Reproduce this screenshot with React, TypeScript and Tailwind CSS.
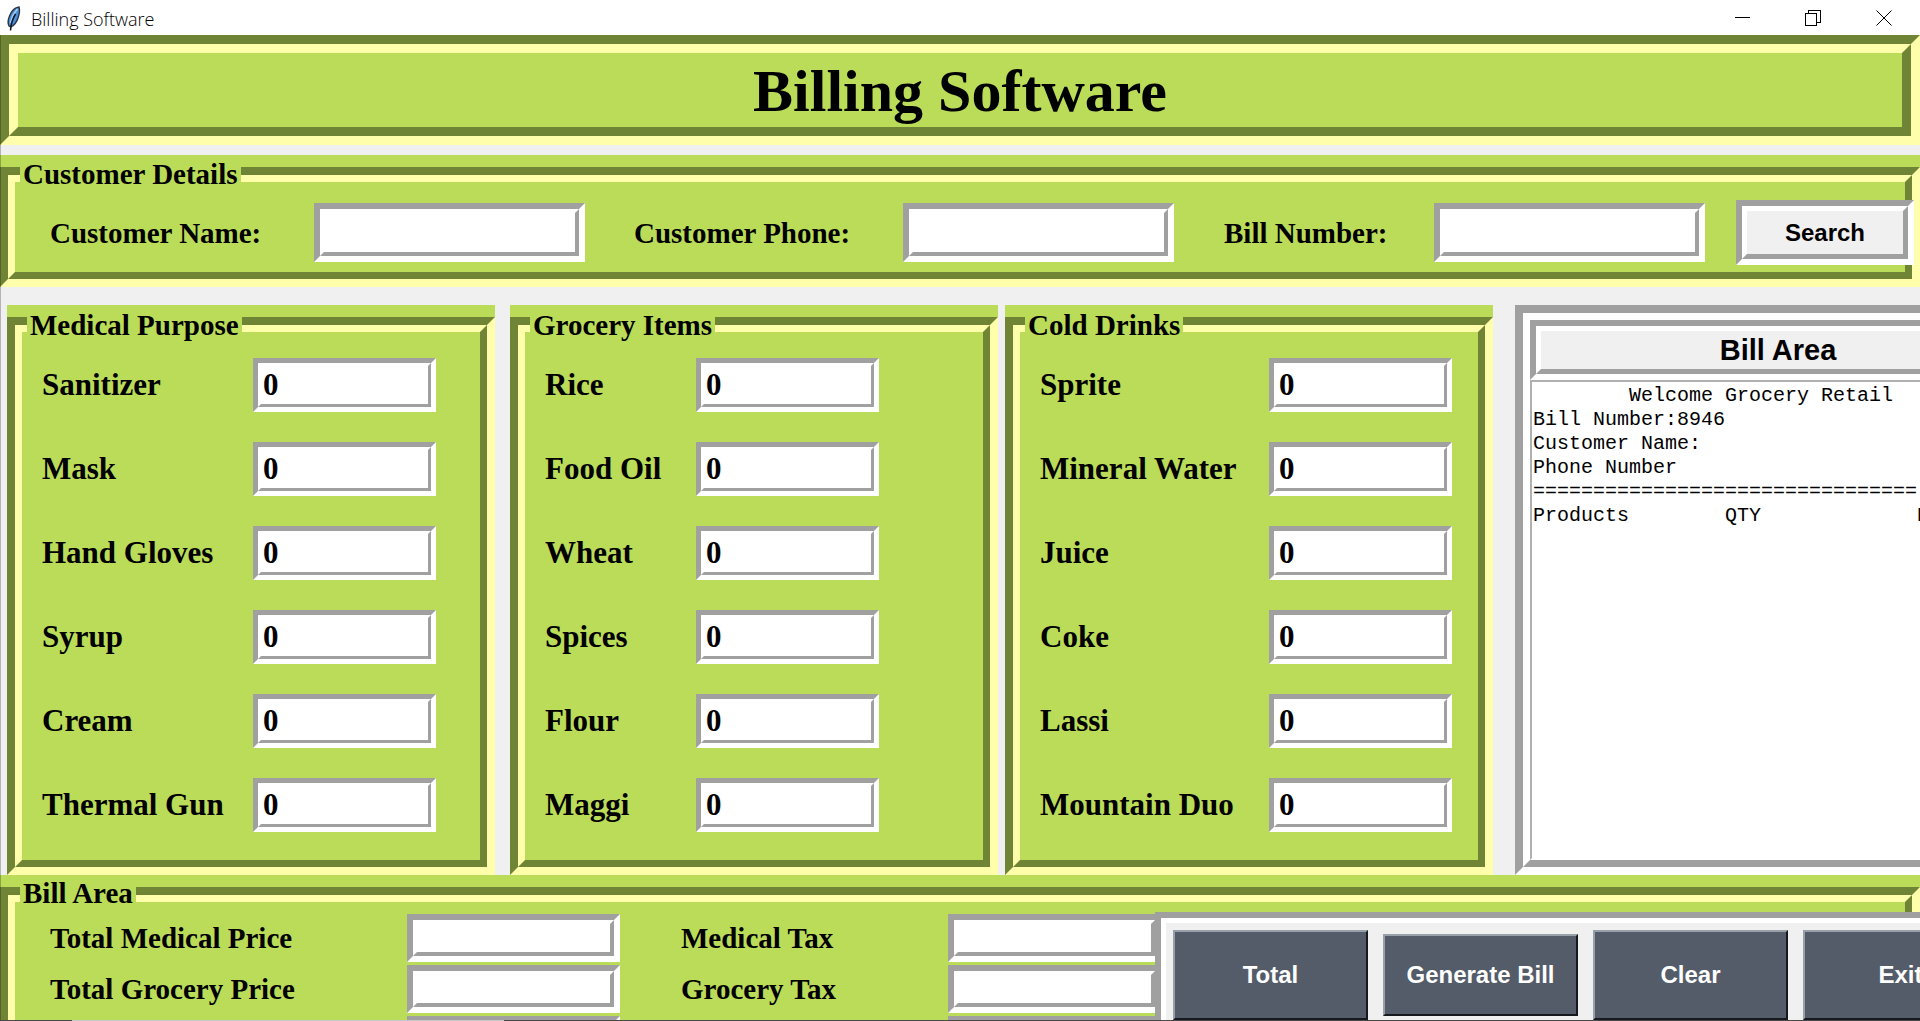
import { useId, type ReactNode } from "react";

const serif = "font-['Liberation_Serif','Times_New_Roman',serif] font-bold";
const sans = "font-['Liberation_Sans',Arial,sans-serif] font-bold";
const mono = "font-['Liberation_Mono','Courier_New',monospace]";

/* A groove is two nested frames: the outer one sunken, the inner one raised. */
const greenOuter = "border-t-[#708435] border-l-[#708435] border-b-[#ffffab] border-r-[#ffffab]";
const greenInner = "border-t-[#ffffab] border-l-[#ffffab] border-b-[#708435] border-r-[#708435]";
const grayOuter = "border-t-[#a0a0a0] border-l-[#a0a0a0] border-b-white border-r-white";
const grayInner = "border-t-white border-l-white border-b-[#a0a0a0] border-r-[#a0a0a0]";

function Field({
  className,
  inner,
  id,
  value = "",
}: {
  className: string;
  inner: string;
  id: string;
  value?: string;
}) {
  return (
    <div className={`flex shrink-0 ${grayOuter} ${className}`}>
      <input
        id={id}
        type="text"
        defaultValue={value}
        className={`min-w-0 flex-1 bg-white px-0.5 text-black outline-none ${grayInner} ${inner}`}
      />
    </div>
  );
}

function Group({
  title,
  className = "",
  legendClass,
  bodyClass,
  children,
}: {
  title: string;
  className?: string;
  legendClass: string;
  bodyClass: string;
  children: ReactNode;
}) {
  return (
    <fieldset className={`relative flex min-w-0 flex-col bg-[#badc58] pt-3 ${className}`}>
      <div className={`flex flex-1 flex-col border-8 ${greenOuter}`}>
        <div className={`flex-1 border-[7px] ${greenInner} ${bodyClass}`}>{children}</div>
      </div>
      <legend className={`absolute left-5 bg-[#badc58] px-[3px] leading-8 ${serif} ${legendClass}`}>
        {title}
      </legend>
    </fieldset>
  );
}

function CustomerField({ label }: { label: string }) {
  const id = useId();
  return (
    <>
      <label htmlFor={id} className={`text-[29px] leading-8 whitespace-nowrap ${serif}`}>
        {label}
      </label>
      <Field id={id} className="h-[59px] w-[271px] border-6" inner={`border-4 text-2xl ${sans}`} />
    </>
  );
}

function ItemRow({ label }: { label: string }) {
  const id = useId();
  return (
    <>
      <label htmlFor={id} className={`text-[31px] leading-9 whitespace-nowrap ${serif}`}>
        {label}
      </label>
      <Field
        id={id}
        value="0"
        className="h-[54px] border-[5px]"
        inner={`border-[3px] text-[31px] leading-9 ${serif}`}
      />
    </>
  );
}

function ItemGroup({ title, items, columns }: { title: string; items: string[]; columns: string }) {
  return (
    <Group
      title={title}
      className="w-[488px] shrink-0"
      legendClass="top-1 text-[29px]"
      bodyClass="pt-[26px] pb-7 pl-5"
    >
      <div className={`grid items-center justify-start gap-y-[30px] ${columns}`}>
        {items.map((item) => (
          <ItemRow key={item} label={item} />
        ))}
      </div>
    </Group>
  );
}

function TotalsRow({ label, tax }: { label: string; tax: string }) {
  const a = useId();
  const b = useId();
  const text = `text-[29px] leading-6 whitespace-nowrap ${serif}`;
  return (
    <>
      <label htmlFor={a} className={text}>
        {label}
      </label>
      <Field id={a} className="h-12 border-6" inner={`border-4 text-xl ${sans}`} />
      <label htmlFor={b} className={`pl-[61px] ${text}`}>
        {tax}
      </label>
      <Field id={b} className="h-12 border-6" inner={`border-4 text-xl ${sans}`} />
    </>
  );
}

function ActionButton({ label, height }: { label: string; height: string }) {
  return (
    <button
      type="button"
      className={`w-[195px] shrink-0 border-2 border-t-[#98a1a9] border-l-[#98a1a9] border-r-[#16191d] border-b-[#16191d] bg-[#535c68] text-2xl whitespace-nowrap text-white ${height} ${sans}`}
    >
      {label}
    </button>
  );
}

function TitleBar() {
  return (
    <header className="flex h-[35px] shrink-0 items-center bg-white">
      <svg className="ml-1.5 h-8 w-4 shrink-0" viewBox="0 0 16 32" aria-hidden="true">
        <path
          d="M13 5C9.500 5.500 5.500 9 3.500 14c-1.500 3.700-2 7-.5 10l2 1c3.500-2 6-5.500 7.200-9.500C13.500 11.500 14 8 13 5Z"
          fill="#4a8fdc"
          stroke="#2c3644"
          strokeWidth="1.400"
        />
        <path d="M11.500 7C8 11 5.500 15.500 4.500 21" stroke="#a9cdf5" strokeWidth="1.600" fill="none" />
        <path d="M9.500 12c-2.500 4-4.500 9-5 16.500" stroke="#101820" strokeWidth="1.500" fill="none" />
      </svg>
      <span className="mt-0.5 ml-[9px] font-['Open_Sans','Noto_Sans',sans-serif] text-lg leading-6 font-light text-black">
        Billing Software
      </span>
      <div className="ml-auto flex h-full">
        <button type="button" aria-label="Minimize" className="grid w-[70px] place-items-center">
          <svg width="16" height="16" viewBox="0 0 16 16" shapeRendering="crispEdges">
            <path d="M0 7.500h15" stroke="#000" />
          </svg>
        </button>
        <button type="button" aria-label="Restore" className="grid w-[69px] place-items-center">
          <svg width="16" height="16" viewBox="0 0 16 16" fill="none" shapeRendering="crispEdges">
            <path d="M.5 3.500h11v12H.5zM3.500 3.500v-3h12v12h-4" stroke="#000" />
          </svg>
        </button>
        <button type="button" aria-label="Close" className="grid w-[73px] place-items-center">
          <svg width="16" height="16" viewBox="0 0 16 16">
            <path d="M.5.5l15 15M15.500.5l-15 15" stroke="#000" />
          </svg>
        </button>
      </div>
    </header>
  );
}

const groups = [
  {
    title: "Medical Purpose",
    items: ["Sanitizer", "Mask", "Hand Gloves", "Syrup", "Cream", "Thermal Gun"],
    columns: "grid-cols-[211px_183px]",
  },
  {
    title: "Grocery Items",
    items: ["Rice", "Food Oil", "Wheat", "Spices", "Flour", "Maggi"],
    columns: "grid-cols-[151px_183px]",
  },
  {
    title: "Cold Drinks",
    items: ["Sprite", "Mineral Water", "Juice", "Coke", "Lassi", "Mountain Duo"],
    columns: "grid-cols-[229px_183px]",
  },
];

const receipt = [
  "        Welcome Grocery Retail",
  "Bill Number:8946",
  "Customer Name:",
  "Phone Number",
  "================================",
  "Products        QTY             Price",
].join("\n");

export default function App() {
  return (
    <div className="flex h-screen flex-col overflow-hidden bg-[#f0f0f0] text-black">
      <TitleBar />
      <main className="relative flex min-h-0 flex-1 flex-col overflow-hidden before:absolute before:inset-y-0 before:left-0 before:z-10 before:w-px before:bg-black/25">
        <div className={`shrink-0 border-[9px] ${greenOuter}`}>
          <h1
            className={`border-[9px] bg-[#badc58] pt-1 pb-0.5 text-center text-6xl leading-[68px] ${greenInner} ${serif}`}
          >
            Billing Software
          </h1>
        </div>

        <Group
          title="Customer Details"
          className="mt-2.5 shrink-0"
          legendClass="top-[3px] text-[29px]"
          bodyClass="pt-[18px] pb-[7px] pl-[35px]"
        >
          <div className="grid grid-cols-[264px_320px_269px_321px_210px_302px_178px] items-center">
            <CustomerField label="Customer Name:" />
            <CustomerField label="Customer Phone:" />
            <CustomerField label="Bill Number:" />
            <div className={`flex h-[65px] border-6 ${grayOuter}`}>
              <button type="button" className={`flex-1 border-[5px] bg-[#f0f0f0] text-2xl ${grayInner} ${sans}`}>
                Search
              </button>
            </div>
          </div>
        </Group>

        <div className="mt-[18px] flex shrink-0 pl-[7px]">
          <div className="flex shrink-0 gap-[15px]">
            <ItemGroup {...groups[0]} />
            <div className="flex shrink-0 gap-[7px]">
              <ItemGroup {...groups[1]} />
              <ItemGroup {...groups[2]} />
            </div>
          </div>
          <section className={`ml-[22px] flex w-[526px] shrink-0 flex-col border-8 ${grayOuter}`}>
            <div className={`flex flex-1 flex-col border-[7px] ${grayInner}`}>
              <div className={`shrink-0 border-6 ${grayOuter}`}>
                <h2
                  className={`border-[5px] bg-[#f0f0f0] text-center text-[29px] leading-[38px] ${grayInner} ${sans}`}
                >
                  Bill Area
                </h2>
              </div>
              <textarea
                readOnly
                wrap="off"
                aria-label="Bill"
                defaultValue={receipt}
                className={`block w-full flex-1 resize-none overflow-hidden border-2 border-[#b0b0b0] border-r-white border-b-white bg-white px-px py-0.5 text-xl leading-6 text-black outline-none ${mono}`}
              />
            </div>
          </section>
        </div>

        <div className="relative shrink-0">
          <Group
            title="Bill Area"
            legendClass="top-0.5 text-[29px]"
            bodyClass="pt-3 pb-3 pl-[35px]"
          >
            <div className="grid grid-cols-[357px_213px_328px_213px] items-center gap-y-[3px]">
              <TotalsRow label="Total Medical Price" tax="Medical Tax" />
              <TotalsRow label="Total Grocery Price" tax="Grocery Tax" />
              <TotalsRow label="Total Cold Drinks Price" tax="Cold Drinks Tax" />
            </div>
          </Group>
          <div className={`absolute top-[37px] left-[1155px] border-6 ${grayOuter}`}>
            <div className={`flex items-center gap-[15px] border-[5px] bg-[#f0f0f0] p-[7px] ${grayInner}`}>
              <ActionButton label="Total" height="h-[90px]" />
              <ActionButton label="Generate Bill" height="h-[82px]" />
              <ActionButton label="Clear" height="h-[90px]" />
              <ActionButton label="Exit" height="h-[90px]" />
            </div>
          </div>
        </div>
      </main>
      <footer className="flex h-px shrink-0 bg-[#484848]">
        <div className="ml-[72px] w-[432px] bg-[#c8c8c8]" />
      </footer>
    </div>
  );
}
